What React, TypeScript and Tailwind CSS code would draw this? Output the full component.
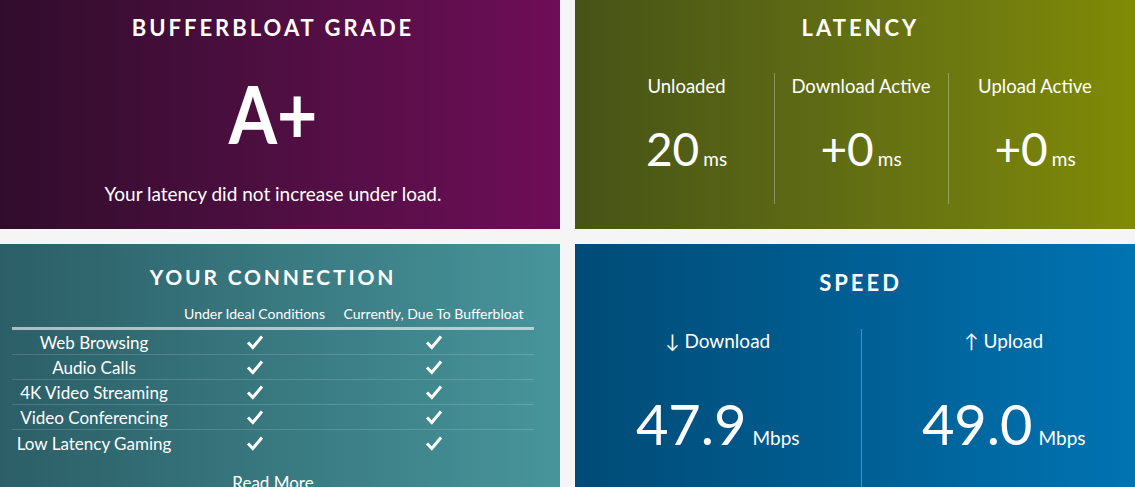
import React from "react";

function Check() {
  return (
    <svg width="18" height="16" viewBox="0 0 18 16" className="block">
      <path d="M2 8.5 L6.8 13.5 L16 2.5" fill="none" stroke="white" strokeWidth="3" strokeLinecap="butt" strokeLinejoin="miter" />
    </svg>
  );
}

const latency = [
  { label: "Unloaded", value: "20" },
  { label: "Download Active", value: "+0" },
  { label: "Upload Active", value: "+0" },
];

const rows = ["Web Browsing", "Audio Calls", "4K Video Streaming", "Video Conferencing", "Low Latency Gaming"];

export default function App() {
  return (
    <div className="w-[1135px] h-[487px] overflow-hidden bg-[#f5f5f5] font-['Lato',sans-serif] text-white">
      <div className="ml-[-14px] grid grid-cols-[574px_571px] grid-rows-[229px_260px] gap-[15px]">
        {/* Bufferbloat grade */}
        <div className="bg-linear-to-r from-[#2f0c2b] to-[#6f0d58] flex flex-col items-center">
          <div className="mt-[14px] leading-[28px] text-[22px] font-bold tracking-[3px]">BUFFERBLOAT GRADE</div>
          <div className="mt-[41px] leading-[60px] text-[80px] font-bold inline-block scale-x-[0.87]">A+</div>
          <div className="mt-[39px] leading-[24px] text-[19px]">Your latency did not increase under load.</div>
        </div>

        {/* Latency */}
        <div className="bg-linear-to-r from-[#465316] to-[#818c04] flex flex-col items-center">
          <div className="mt-[14px] leading-[28px] text-[22px] font-bold tracking-[3px]">LATENCY</div>
          <div className="mt-[31px] grid grid-cols-3 w-[522px] h-[131px]">
            {latency.map((c, i) => (
              <div key={c.label} className={i > 0 ? "border-l border-white/30 flex flex-col items-center" : "flex flex-col items-center"}>
                <div className="mt-[1px] leading-[24px] text-[18.5px]">{c.label}</div>
                <div className="mt-[26px] flex items-baseline leading-[50px]">
                  <span className="text-[46px]">{c.value}</span>
                  <span className="ml-[4px] text-[19px]">ms</span>
                </div>
              </div>
            ))}
          </div>
        </div>

        {/* Your connection */}
        <div className="bg-linear-to-r from-[#2b5d65] to-[#47959b] flex flex-col items-center">
          <div className="mt-[19px] leading-[28px] text-[21px] font-bold tracking-[2.8px]">YOUR CONNECTION</div>
          <div className="mt-[13px] w-[522px]">
            <div className="grid grid-cols-[164px_157px_201px] h-[20px] leading-[20px] text-[14px]">
              <div />
              <div className="text-center">Under Ideal Conditions</div>
              <div className="text-center">Currently, Due To Bufferbloat</div>
            </div>
            <div className="mt-[3px] h-[3px] bg-white/60" />
            {rows.map((r, i) => (
              <div
                key={r}
                className={
                  i < rows.length - 1
                    ? "grid grid-cols-[164px_157px_201px] h-[25px] items-center border-b border-white/15"
                    : "grid grid-cols-[164px_157px_201px] h-[25px] items-center"
                }
              >
                <div className="text-center text-[17px] leading-[22px] pt-[2px]">{r}</div>
                <div className="flex justify-center"><Check /></div>
                <div className="flex justify-center"><Check /></div>
              </div>
            ))}
          </div>
          <div className="mt-[18px] leading-[20px] text-[17px]">Read More</div>
        </div>

        {/* Speed */}
        <div className="bg-linear-to-r from-[#004b76] to-[#0074b3] flex flex-col items-center">
          <div className="mt-[25px] leading-[28px] text-[22px] font-bold tracking-[3px]">SPEED</div>
          <div className="mt-[32px] grid grid-cols-2 w-full flex-1">
            {[
              { label: "↓ Download", value: "47.9" },
              { label: "↑ Upload", value: "49.0" },
            ].map((c, i) => (
              <div key={c.label} className={i > 0 ? "border-l border-white/30 flex flex-col items-center" : "flex flex-col items-center"}>
                <div className="leading-[24px] text-[19px]">{c.label}</div>
                <div className="mt-[43px] flex items-baseline leading-[56px]">
                  <span className="text-[56px]">{c.value}</span>
                  <span className="ml-[6px] text-[19px]">Mbps</span>
                </div>
              </div>
            ))}
          </div>
        </div>
      </div>
    </div>
  );
}
